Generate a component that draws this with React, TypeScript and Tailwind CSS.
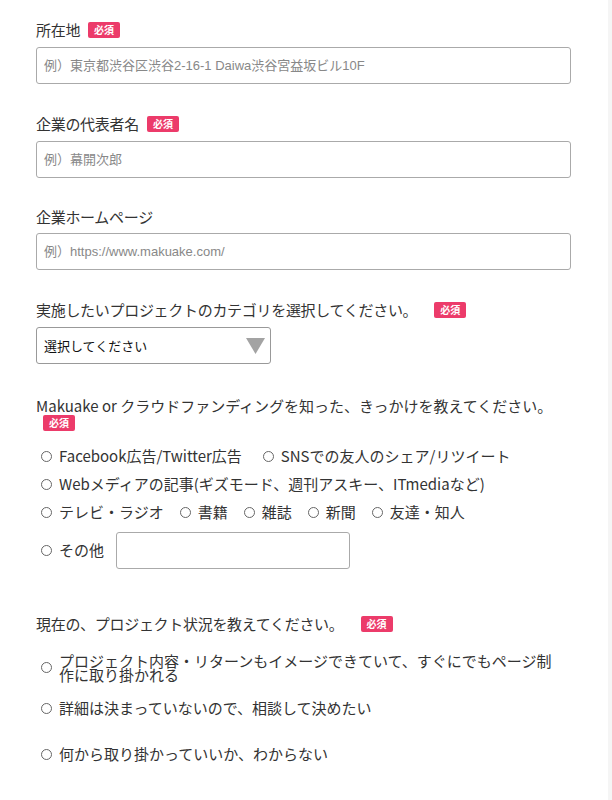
import React from "react";

const JP = { fontFamily: '"Noto Sans CJK JP", "Noto Sans", sans-serif' };
const PH = { fontFamily: '"Liberation Sans", "Noto Sans CJK JP", sans-serif' };

function Badge({ className = "" }: { className?: string }) {
  return (
    <span
      className={`inline-flex h-[16px] w-[32px] items-center justify-center rounded-[2px] bg-[#ec3b6a] text-[10px] font-bold leading-none text-white ${className}`}
      style={JP}
    >
      必須
    </span>
  );
}

function Circle() {
  return (
    <span className="inline-block h-[11px] w-[11px] shrink-0 rounded-full border border-[#666] bg-white" />
  );
}

function Radio({ label }: { label: string }) {
  return (
    <span className="flex items-center">
      <Circle />
      <span className="ml-[7px]">{label}</span>
    </span>
  );
}

function TextInput({ placeholder }: { placeholder: string }) {
  return (
    <div className="flex h-[37px] w-[535px] items-center rounded-[3px] border border-[#aaa] bg-white pl-[7px] text-[13px] text-[#888]" style={PH}>
      {placeholder}
    </div>
  );
}

export default function App() {
  return (
    <div className="flex min-h-[800px] w-[612px] bg-white text-[15px] text-[#333]" style={JP}>
      <div className="flex-1 pl-[36px]">
        {/* 所在地 */}
        <div className="mt-[19px] flex h-[22px] items-center">
          <span className="tracking-[-0.3px]">所在地</span>
          <Badge className="ml-[8px]" />
        </div>
        <div className="mt-[6px]">
          <TextInput placeholder="例）東京都渋谷区渋谷2-16-1 Daiwa渋谷宮益坂ビル10F" />
        </div>

        {/* 代表者名 */}
        <div className="mt-[29px] flex h-[22px] items-center">
          <span className="tracking-[-0.3px]">企業の代表者名</span>
          <Badge className="ml-[8px]" />
        </div>
        <div className="mt-[6px]">
          <TextInput placeholder="例）幕開次郎" />
        </div>

        {/* ホームページ */}
        <div className="mt-[28px] flex h-[22px] items-center">
          <span className="tracking-[-0.3px]">企業ホームページ</span>
        </div>
        <div className="mt-[5px]">
          <TextInput placeholder="例）https://www.makuake.com/" />
        </div>

        {/* カテゴリ */}
        <div className="mt-[29px] flex h-[22px] items-center">
          <span className="tracking-[-0.3px]">実施したいプロジェクトのカテゴリを選択してください。</span>
          <Badge className="ml-[17px]" />
        </div>
        <div className="mt-[6px] flex h-[37px] w-[235px] items-center justify-between rounded-[3px] border border-[#999] bg-white pl-[7px] pr-[5px] text-[13px] text-[#111]">
          <span>選択してください</span>
          <svg width="19" height="17" viewBox="0 0 19 17">
            <polygon points="0,1 19,1 9.5,17" fill="#a3a3a3" />
          </svg>
        </div>

        {/* きっかけ */}
        <div className="mt-[35px] flex h-[14px] items-center">
          <span className="leading-[14px]">Makuake or クラウドファンディングを知った、きっかけを教えてください。</span>
        </div>
        <div className="ml-[7px] mt-[2px] flex">
          <Badge />
        </div>
        <div className="ml-[5px] mt-[14px] flex h-[22px] items-center gap-[21px]">
          <Radio label="Facebook広告/Twitter広告" />
          <Radio label="SNSでの友人のシェア/リツイート" />
        </div>
        <div className="ml-[5px] mt-[6px] flex h-[22px] items-center">
          <Radio label="Webメディアの記事(ギズモード、週刊アスキー、ITmediaなど)" />
        </div>
        <div className="ml-[5px] mt-[6px] flex h-[22px] items-center gap-[16px]">
          <Radio label="テレビ・ラジオ" />
          <Radio label="書籍" />
          <Radio label="雑誌" />
          <Radio label="新聞" />
          <Radio label="友達・知人" />
        </div>
        <div className="ml-[5px] mt-[9px] flex items-center">
          <Radio label="その他" />
          <div className="ml-[12px] h-[37px] w-[234px] rounded-[3px] border border-[#aaa] bg-white" />
        </div>

        {/* 状況 */}
        <div className="mt-[44px] flex h-[22px] items-center">
          <span className="tracking-[-0.3px]">現在の、プロジェクト状況を教えてください。</span>
          <Badge className="ml-[17px]" />
        </div>
        <div className="ml-[5px] mt-[19px] flex w-[515px] items-start">
          <span className="mt-[2px]"><Circle /></span>
          <span className="ml-[7px] leading-[14px]">
            プロジェクト内容・リターンもイメージできていて、すぐにでもページ制作に取り掛かれる
          </span>
        </div>
        <div className="ml-[5px] mt-[15px] flex h-[22px] items-center">
          <Radio label="詳細は決まっていないので、相談して決めたい" />
        </div>
        <div className="ml-[5px] mt-[24px] flex h-[22px] items-center">
          <Radio label="何から取り掛かっていいか、わからない" />
        </div>
      </div>
      <div className="w-[4px] bg-[#f5f5f5]" />
    </div>
  );
}
